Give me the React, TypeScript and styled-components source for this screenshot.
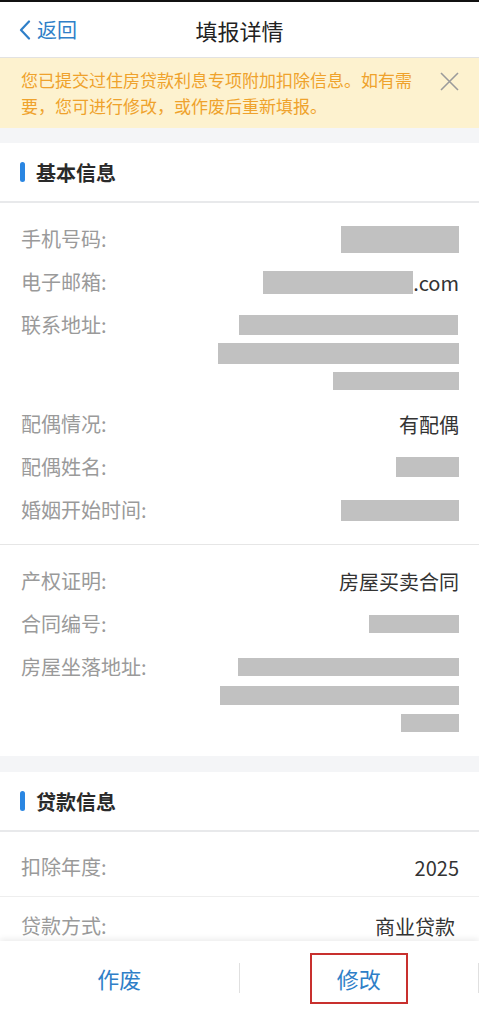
import styled, { createGlobalStyle } from "styled-components";

const GlobalStyle = createGlobalStyle`
  html, body, #root {
    margin: 0;
    padding: 0;
    height: 100%;
  }
  body {
    font-family: "Noto Sans CJK SC", "Noto Sans", sans-serif;
    background: #ffffff;
    -webkit-font-smoothing: antialiased;
  }
`

const Page = styled.div`
  display: flex;
  flex-direction: column;
  height: 100vh;
  width: 100%;
  border-top: 2px solid #111;
  box-sizing: border-box;
  overflow: hidden;
`

const NavBar = styled.div`
  display: grid;
  grid-template-columns: 1fr auto 1fr;
  align-items: center;
  height: 55px;
  flex-shrink: 0;
  background: #fff;
  border-bottom: 1px solid #e2e2e2;
`

const BackLink = styled.a`
  display: flex;
  align-items: center;
  gap: 6px;
  padding-left: 19px;
  color: #2f7fc8;
  font-size: 20px;
  text-decoration: none;
`

const NavTitle = styled.div`
  font-size: 22px;
  color: #222;
  line-height: 1;
`

const Content = styled.div`
  flex: 1;
  overflow: hidden;
  background: #f4f5f7;
`

const Notice = styled.div`
  display: flex;
  justify-content: space-between;
  align-items: flex-start;
  padding: 9px 20px 9px 21px;
  background: #fdf2cf;
`

const NoticeText = styled.div`
  width: 400px;
  font-size: 17px;
  line-height: 26px;
  color: #efa22c;
`

const CloseButton = styled.button`
  margin-top: 5px;
  padding: 0;
  border: 0;
  background: none;
  line-height: 0;
`

const Section = styled.div`
  background: #fff;
  margin-top: ${p => p.$gap}px;
`

const SectionHeader = styled.div`
  display: flex;
  align-items: center;
  gap: 11px;
  height: 58px;
  padding-left: 20px;
  border-bottom: 2px solid #e8e9eb;
  font-size: 20px;
  font-weight: 700;
  color: #2a2a2a;
`

const Marker = styled.span`
  width: 5px;
  height: 20px;
  border-radius: 3px;
  background: #2a86e2;
`

const Group = styled.div`
  display: flex;
  flex-direction: column;
  gap: 15px;
  padding: 22px 20px ${p => p.$bottom}px 21px;
  border-bottom: ${p => (p.$divider ? "1px solid #e6e6e6" : "none")};
`

const Row = styled.div`
  display: flex;
  justify-content: space-between;
  align-items: flex-start;
`

const Label = styled.span`
  font-size: 20px;
  line-height: 28px;
  color: #9a9a9a;
  white-space: nowrap;
`

const Value = styled.div`
  display: flex;
  flex-direction: column;
  align-items: flex-end;
`

const ValueLine = styled.div`
  display: flex;
  align-items: center;
  height: 28px;
  font-size: 20px;
  color: #333;
`

const Redact = styled.span`
  display: block;
  width: ${p => p.$w}px;
  height: ${p => p.$h}px;
  margin-right: ${p => p.$shift || 0}px;
  background: #c1c1c1;
`

const List = styled.div`
  padding-top: 6px;
`

const ListRow = styled.div`
  display: flex;
  justify-content: space-between;
  align-items: center;
  height: 58px;
  padding: 0 ${p => p.$right}px 0 21px;
  border-bottom: 1px solid #eeeeee;
`

const Footer = styled.div`
  position: relative;
  display: flex;
  align-items: center;
  height: 78px;
  padding-bottom: 4px;
  box-sizing: border-box;
  flex-shrink: 0;
  background: #fff;
  box-shadow: 0 -2px 6px rgba(0, 0, 0, 0.08);
`

const FooterButton = styled.button`
  flex: 1;
  display: flex;
  justify-content: center;
  align-items: center;
  padding: 0;
  border: 0;
  background: none;
  font-family: inherit;
  font-size: 22px;
  color: #2f7fc8;
`

const Highlight = styled.span`
  display: flex;
  justify-content: center;
  align-items: center;
  width: 98px;
  height: 51px;
  box-sizing: border-box;
  border: 2px solid #c8302e;
`

const Separator = styled.span`
  width: 1px;
  height: 30px;
  background: #e0e0e0;
`

type Line = { text?: string; w?: number; h?: number; shift?: number }

const basicGroup: { label: string; lines: Line[] }[] = [
  { label: "手机号码:", lines: [{ w: 118, h: 27 }] },
  { label: "电子邮箱:", lines: [{ w: 150, h: 23, text: ".com" }] },
  {
    label: "联系地址:",
    lines: [
      { w: 219, h: 20, shift: 1 },
      { w: 241, h: 21 },
      { w: 126, h: 18 },
    ],
  },
  { label: "配偶情况:", lines: [{ text: "有配偶" }] },
  { label: "配偶姓名:", lines: [{ w: 63, h: 20 }] },
  { label: "婚姻开始时间:", lines: [{ w: 118, h: 21 }] },
]

const houseGroup: { label: string; lines: Line[] }[] = [
  { label: "产权证明:", lines: [{ text: "房屋买卖合同" }] },
  { label: "合同编号:", lines: [{ w: 90, h: 18 }] },
  {
    label: "房屋坐落地址:",
    lines: [
      { w: 221, h: 18 },
      { w: 239, h: 19 },
      { w: 58, h: 18 },
    ],
  },
]

const renderRows = (rows: { label: string; lines: Line[] }[]) =>
  rows.map(r => (
    <Row key={r.label}>
      <Label>{r.label}</Label>
      <Value>
        {r.lines.map((l, i) => (
          <ValueLine key={i}>
            {l.w && <Redact $w={l.w} $h={l.h} $shift={l.shift} />}
            {l.text}
          </ValueLine>
        ))}
      </Value>
    </Row>
  ))

export default function App() {
  return (
    <>
      <GlobalStyle />
      <Page>
        <NavBar>
          <BackLink href="#">
            <svg width="12" height="20" viewBox="0 0 12 20">
              <polyline points="10,1.5 2,10 10,18.5" fill="none" stroke="#2f7fc8" strokeWidth="2.2" strokeLinecap="round" strokeLinejoin="round" />
            </svg>
            返回
          </BackLink>
          <NavTitle>填报详情</NavTitle>
          <span />
        </NavBar>
        <Content>
          <Notice>
            <NoticeText>您已提交过住房贷款利息专项附加扣除信息。如有需要，您可进行修改，或作废后重新填报。</NoticeText>
            <CloseButton aria-label="关闭">
              <svg width="19" height="19" viewBox="0 0 19 19">
                <path d="M1 1L18 18M18 1L1 18" stroke="#9b9b9b" strokeWidth="1.6" />
              </svg>
            </CloseButton>
          </Notice>
          <Section $gap={15}>
            <SectionHeader>
              <Marker />
              基本信息
            </SectionHeader>
            <Group $divider $bottom={20}>{renderRows(basicGroup)}</Group>
            <Group $bottom={19}>{renderRows(houseGroup)}</Group>
          </Section>
          <Section $gap={16}>
            <SectionHeader>
              <Marker />
              贷款信息
            </SectionHeader>
            <List>
              <ListRow $right={20}>
                <Label>扣除年度:</Label>
                <ValueLine>2025</ValueLine>
              </ListRow>
              <ListRow $right={24}>
                <Label>贷款方式:</Label>
                <ValueLine>商业贷款</ValueLine>
              </ListRow>
            </List>
          </Section>
        </Content>
        <Footer>
          <FooterButton>作废</FooterButton>
          <Separator />
          <FooterButton>
            <Highlight>修改</Highlight>
          </FooterButton>
          <Separator />
        </Footer>
      </Page>
    </>
  )
}
